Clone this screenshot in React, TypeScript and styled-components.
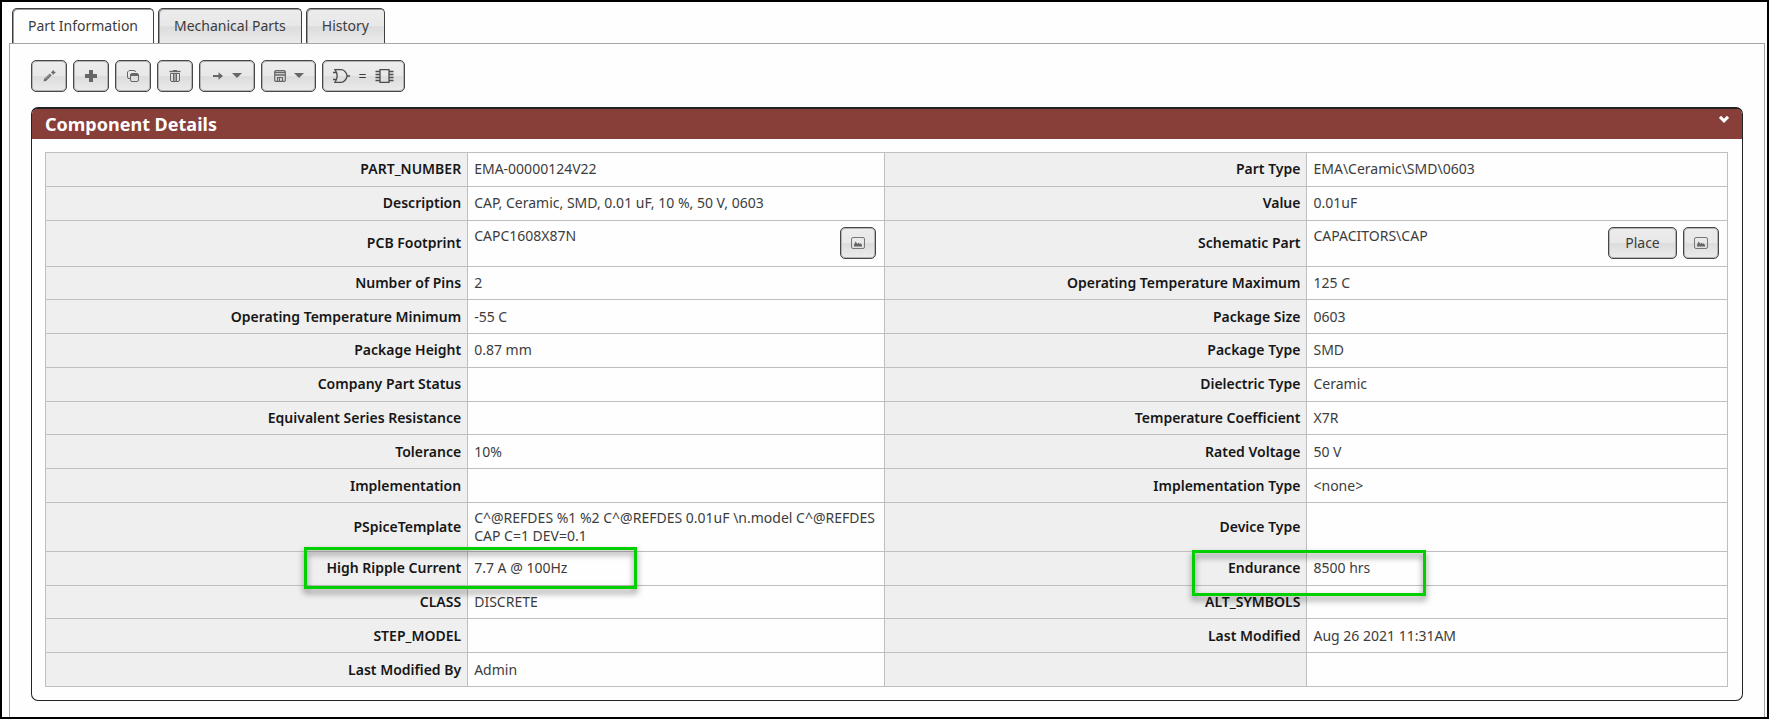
import React from "react";
import styled, { createGlobalStyle, css } from "styled-components";

const GlobalStyle = createGlobalStyle`
  *, *::before, *::after { box-sizing: border-box; }
  body {
    margin: 0;
    background: #fefefe;
    color: #3c3c3c;
    font-family: "Trebuchet MS", "Noto Sans", "Open Sans", sans-serif;
    font-size: 14px;
    line-height: 18px;
  }
`;

const raised = css`
  background: linear-gradient(#ececec, #e8e8e8 50%, #dcdcdc 52%, #ebebeb);
`;

const Page = styled.div`
  display: flex;
  flex-direction: column;
  min-height: 100vh;
  padding: 6px 2px 0 7px;
  border: 2px solid #000;
`;

const Tabs = styled.div`
  display: flex;
  gap: 4px;
  padding-left: 3px;
`;

const Tab = styled.button<{ $active?: boolean }>`
  height: ${(p) => (p.$active ? 36 : 35)}px;
  margin-bottom: ${(p) => (p.$active ? -1 : 0)}px;
  padding: 0 15px 1px;
  border: 1px solid #3f3f3f;
  border-bottom: 0;
  border-radius: 5px 5px 0 0;
  box-shadow: inset 1px 1px 0 #9a9a9a;
  color: #3c3c3c;
  font: inherit;
  ${(p) => (p.$active ? "background: #fefefe;" : raised)}
`;

const TabPanel = styled.main`
  flex: 1;
  padding: 16px 21px 16px 21px;
  border: 1px solid #a6a6a6;
  border-bottom: 0;
`;

const Toolbar = styled.div`
  display: flex;
  gap: 6px;
`;

const Button = styled.button<{ $width: number }>`
  display: inline-flex;
  align-items: center;
  justify-content: center;
  gap: 8px;
  width: ${(p) => p.$width}px;
  height: 32px;
  padding: 0;
  border: 1px solid #474747;
  border-radius: 5px;
  box-shadow: inset 0 0 0 1px #b4b4b4;
  color: #3c3c3c;
  font: inherit;
  ${raised}
`;

const Details = styled.section`
  margin-top: 15px;
  padding-bottom: 13px;
  border: 1px solid #222;
  border-top-width: 2px;
  border-radius: 7px;
`;

const DetailsHeader = styled.header`
  display: flex;
  justify-content: space-between;
  height: 30px;
  padding: 0 13px;
  border-radius: 5px 5px 0 0;
  background: #883e39;
  color: #fff;
`;

const Title = styled.h2`
  margin: 0;
  font-size: 18px;
  line-height: 30px;
`;

const Collapse = styled.button`
  align-self: flex-start;
  display: flex;
  padding: 6px 0;
  border: 0;
  background: none;
  color: #fff;
`;

const TableWrap = styled.div`
  padding: 13px 14px 0 13px;
`;

const Table = styled.table`
  width: 100%;
  height: 535px;
  border-collapse: collapse;
  table-layout: fixed;
`;

const LabelColumn = styled.col`
  width: 25.1%;
`;

const ValueColumn = styled.col`
  width: 24.8%;
`;

const Row = styled.tr<{ $height?: number }>`
  ${(p) => p.$height && `height: ${p.$height}px;`}
`;

const Label = styled.th`
  padding: 6px;
  border: 1px solid #bfbfbf;
  background: #efefef;
  color: #161616;
  font-weight: 600;
  text-align: right;
`;

const Value = styled.td`
  position: relative;
  padding: 6px;
  border: 1px solid #bfbfbf;
`;

const ValueLine = styled.div`
  display: flex;
  gap: 6px;
  height: 32px;
  padding-right: 2px;
`;

const ValueText = styled.span`
  flex: 1;
`;

const Highlight = styled.span<{ $left: number; $top: number; $width: number; $height: number }>`
  position: absolute;
  z-index: 1;
  left: ${(p) => p.$left}px;
  top: ${(p) => p.$top}px;
  width: ${(p) => p.$width}px;
  height: ${(p) => p.$height}px;
  border: 3px solid #00d000;
  filter: drop-shadow(0 4px 3px rgba(0, 0, 0, 0.5));
  pointer-events: none;
`;

const PencilIcon = () => (
  <svg width="14" height="14" viewBox="0 0 14 14" fill="#666">
    <path d="M1.600 12.600l.6-2.800L7.800 4.400l1.900 1.900-5.400 5.500z" />
    <path d="M3.400 10.200l4.800-4.800" stroke="#ddd" strokeWidth=".6" />
    <path d="M10.400 1.600h1.600v1.200h1.400v1.400h-1.400v1.400h-1.500V4.200H9.300V2.800h1.100z" />
  </svg>
);

const PlusIcon = () => (
  <svg width="14" height="14" viewBox="0 0 14 14" fill="#666">
    <path d="M5 1h4v4h4v4H9v4H5V9H1V5h4z" />
  </svg>
);

const CopyIcon = () => (
  <svg width="14" height="14" viewBox="0 0 14 14" fill="none" stroke="#666">
    <path d="M4 9.500H3A1.500 1.500 0 0 1 1.500 8V3L3 1.500h5A1.500 1.500 0 0 1 9.500 3" />
    <rect x="4.500" y="4.500" width="8" height="8" rx="1.500" />
    <path d="M5 5.500h7M5 6.500h7" />
  </svg>
);

const TrashIcon = () => (
  <svg width="14" height="14" viewBox="0 0 14 14" fill="none" stroke="#666">
    <path d="M1.500 2.500h11" strokeWidth="1.400" />
    <path d="M5 1.500h4M2.500 4.500h9v6.500a1.500 1.500 0 0 1-1.500 1.500H4A1.500 1.500 0 0 1 2.500 11zM5.500 5v7M7 5v7M8.500 5v7" />
  </svg>
);

const ArrowIcon = () => (
  <svg width="12" height="12" viewBox="0 0 12 12" fill="#666">
    <path d="M1 5h5.500V2.200L11 6 6.500 9.800V7H1z" />
  </svg>
);

const CaretIcon = () => (
  <svg width="10" height="12" viewBox="0 0 10 12" fill="#666">
    <path d="M0 3h10L5 8z" />
  </svg>
);

const SaveIcon = () => (
  <svg width="12" height="12" viewBox="1 1 12 12" fill="none" stroke="#666" strokeWidth="1.200">
    <path d="M2.500 1.700h9l.8.8v9l-.8.8h-9l-.8-.8v-9z" />
    <path d="M2 3.600h10M2 6h10" strokeWidth="1.500" />
    <path d="M4.500 8.500h5v4h-5zM6.500 8v4.500" />
  </svg>
);

const ImageIcon = () => (
  <svg width="14" height="12" viewBox="0 0 14 12" fill="none" stroke="#777">
    <rect x=".5" y=".5" width="13" height="11" rx="1.500" />
    <path d="M3 9.500V8l1.500-3.500 2 2.500 1-1.500 1 1.500 1-.7L11 8v1.500z" fill="#666" stroke="none" />
  </svg>
);

const GateIcon = () => (
  <svg width="17" height="14" viewBox="0 0 17 14" fill="none" stroke="#4c4c4c" strokeWidth="1.300">
    <path d="M2 .7h6c3.200 0 5.300 3 6.200 6.300-.9 3.300-3 6.300-6.200 6.300H2C4.600 9.500 4.600 4.500 2 .7z" />
    <path d="M0 3.500h3.500M0 10.500h3.500M14 7h3" />
  </svg>
);

const ChipIcon = () => (
  <svg width="19" height="14" viewBox="0 0 19 14" fill="none" stroke="#4c4c4c" strokeWidth="1.300">
    <path d="M5 .7h9v12.600H5z" />
    <path d="M.5 2.500H5M.5 5.500H5M.5 8.500H5M.5 11.500H5M14 2.500h4.500M14 5.500h4.500M14 8.500h4.500M14 11.500h4.500" />
  </svg>
);

const ChevronIcon = () => (
  <svg width="10" height="8" viewBox="0 0 10 8" fill="none" stroke="#fff" strokeWidth="3">
    <path d="M1 1.800l4 4 4-4" />
  </svg>
);

type Box = [left: number, top: number, width: number, height: number];
interface Field {
  label?: string;
  value?: string;
  actions?: React.ReactNode;
  box?: Box;
}

const preview = (
  <Button $width={36} aria-label="Preview">
    <ImageIcon />
  </Button>
);

const rows: { height?: number; fields: [Field, Field] }[] = [
  { fields: [{ label: "PART_NUMBER", value: "EMA-00000124V22" }, { label: "Part Type", value: "EMA\\Ceramic\\SMD\\0603" }] },
  { fields: [{ label: "Description", value: "CAP, Ceramic, SMD, 0.01 uF, 10 %, 50 V, 0603" }, { label: "Value", value: "0.01uF" }] },
  {
    height: 46,
    fields: [
      { label: "PCB Footprint", value: "CAPC1608X87N", actions: preview },
      {
        label: "Schematic Part",
        value: "CAPACITORS\\CAP",
        actions: (
          <>
            <Button $width={69}>Place</Button>
            {preview}
          </>
        ),
      },
    ],
  },
  { fields: [{ label: "Number of Pins", value: "2" }, { label: "Operating Temperature Maximum", value: "125 C" }] },
  { fields: [{ label: "Operating Temperature Minimum", value: "-55 C" }, { label: "Package Size", value: "0603" }] },
  { fields: [{ label: "Package Height", value: "0.87 mm" }, { label: "Package Type", value: "SMD" }] },
  { fields: [{ label: "Company Part Status" }, { label: "Dielectric Type", value: "Ceramic" }] },
  { fields: [{ label: "Equivalent Series Resistance" }, { label: "Temperature Coefficient", value: "X7R" }] },
  { fields: [{ label: "Tolerance", value: "10%" }, { label: "Rated Voltage", value: "50 V" }] },
  { fields: [{ label: "Implementation" }, { label: "Implementation Type", value: "<none>" }] },
  {
    height: 49,
    fields: [
      { label: "PSpiceTemplate", value: "C^@REFDES %1 %2 C^@REFDES 0.01uF \\n.model C^@REFDES CAP C=1 DEV=0.1" },
      { label: "Device Type" },
    ],
  },
  {
    fields: [
      { label: "High Ripple Current", value: "7.7 A @ 100Hz", box: [-164, -5, 333, 42] },
      { label: "Endurance", value: "8500 hrs", box: [-115, -2, 234, 46] },
    ],
  },
  { fields: [{ label: "CLASS", value: "DISCRETE" }, { label: "ALT_SYMBOLS" }] },
  { fields: [{ label: "STEP_MODEL" }, { label: "Last Modified", value: "Aug 26 2021 11:31AM" }] },
  { fields: [{ label: "Last Modified By", value: "Admin" }, {}] },
];

const FieldCells = ({ label, value, actions, box }: Field) => (
  <>
    <Label scope="row">{label}</Label>
    <Value>
      {actions ? (
        <ValueLine>
          <ValueText>{value}</ValueText>
          {actions}
        </ValueLine>
      ) : (
        value
      )}
      {box && <Highlight $left={box[0]} $top={box[1]} $width={box[2]} $height={box[3]} />}
    </Value>
  </>
);

export default function App() {
  return (
    <Page>
      <GlobalStyle />
      <Tabs role="tablist">
        <Tab role="tab" aria-selected $active>Part Information</Tab>
        <Tab role="tab">Mechanical Parts</Tab>
        <Tab role="tab">History</Tab>
      </Tabs>
      <TabPanel>
        <Toolbar>
          <Button $width={36} aria-label="Edit"><PencilIcon /></Button>
          <Button $width={36} aria-label="Add"><PlusIcon /></Button>
          <Button $width={36} aria-label="Copy"><CopyIcon /></Button>
          <Button $width={36} aria-label="Delete"><TrashIcon /></Button>
          <Button $width={56} aria-label="Move"><ArrowIcon /><CaretIcon /></Button>
          <Button $width={55} aria-label="Save"><SaveIcon /><CaretIcon /></Button>
          <Button $width={83} aria-label="Match symbol and footprint"><GateIcon />=<ChipIcon /></Button>
        </Toolbar>
        <Details>
          <DetailsHeader>
            <Title>Component Details</Title>
            <Collapse aria-label="Collapse"><ChevronIcon /></Collapse>
          </DetailsHeader>
          <TableWrap>
            <Table>
              <colgroup>
                <LabelColumn />
                <ValueColumn />
                <LabelColumn />
                <col />
              </colgroup>
              <tbody>
                {rows.map((row, i) => (
                  <Row key={i} $height={row.height}>
                    <FieldCells {...row.fields[0]} />
                    <FieldCells {...row.fields[1]} />
                  </Row>
                ))}
              </tbody>
            </Table>
          </TableWrap>
        </Details>
      </TabPanel>
    </Page>
  );
}
